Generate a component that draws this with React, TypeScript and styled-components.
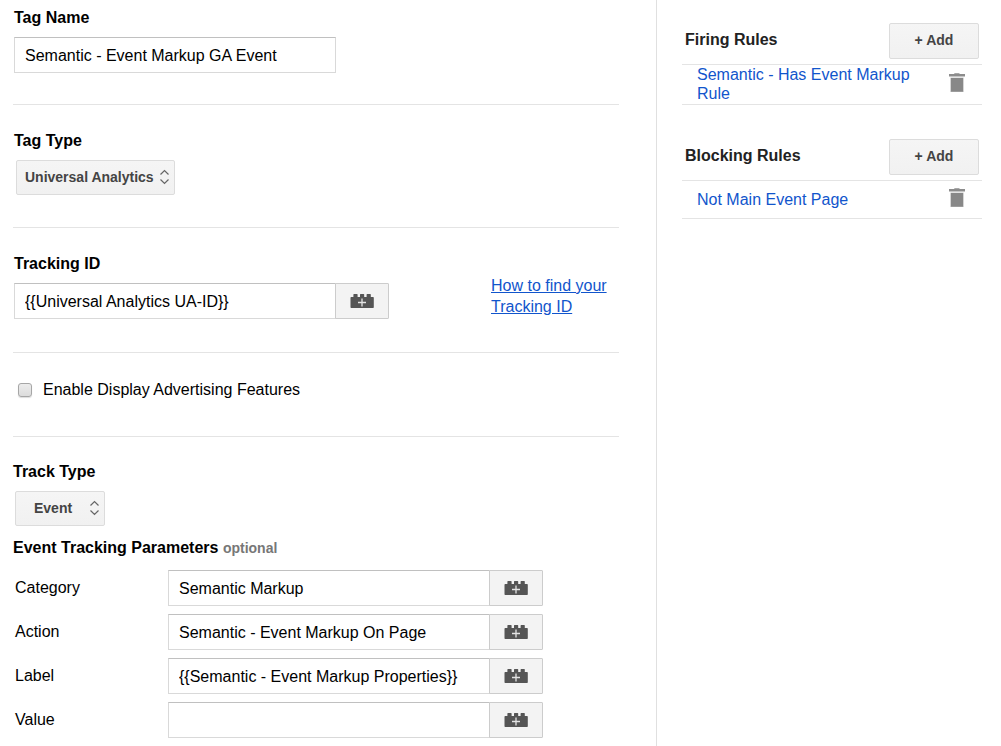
import React from "react";
import styled, { createGlobalStyle } from "styled-components";

const GlobalStyle = createGlobalStyle`
  *, *::before, *::after { box-sizing: border-box; }
  body {
    margin: 0;
    background: #fff;
    color: #000;
    font: 16px/20px "Liberation Sans", Arial, sans-serif;
  }
  button, input, select { font: inherit; color: inherit; margin: 0; }
`;

const Page = styled.div`
  display: flex;
  min-height: 100vh;
`;

const Main = styled.main`
  flex: 1;
  min-width: 0;
  padding: 0 37px 0 13px;
`;

const Sidebar = styled.aside`
  width: 345px;
  flex-shrink: 0;
  border-left: 1px solid #e0e0e0;
  padding: 23px 19px 0 25px;
`;

const Section = styled.section<{ $top?: number; $bottom?: number; $last?: boolean; $inset?: number }>`
  padding: ${(p) => p.$top ?? 26}px 0 ${(p) => p.$bottom ?? 32}px ${(p) => p.$inset ?? 1}px;
  border-bottom: ${(p) => (p.$last ? "none" : "1px solid #e4e4e4")};
`;

const FieldLabel = styled.label`
  display: block;
  width: fit-content;
  margin-bottom: 9px;
  font-weight: bold;
`;

const TextInput = styled.input`
  display: block;
  width: 322px;
  height: 36px;
  padding: 1px 10px 0;
  border: 1px solid #d9d9d9;
  border-top-color: #c0c0c0;
  border-radius: 0;
  background: #fff;
  outline-color: #4d90fe;
`;

const InputGroup = styled.div`
  display: flex;
`;

const MacroButton = styled.button`
  display: flex;
  align-items: center;
  justify-content: center;
  width: 54px;
  height: 36px;
  margin-left: -1px;
  padding: 0;
  border: 1px solid #ccc;
  border-radius: 0 1px 1px 0;
  background: #f3f3f3;
  cursor: pointer;
`;

const SelectBox = styled.div<{ $width: number }>`
  position: relative;
  width: ${(p) => p.$width}px;
  margin-left: 2px;

  svg {
    position: absolute;
    top: 9px;
    right: 5px;
    pointer-events: none;
  }
`;

const Select = styled.select<{ $indent: number }>`
  display: block;
  appearance: none;
  width: 100%;
  height: 35px;
  padding: 0 20px 2px ${(p) => p.$indent}px;
  border: 1px solid #dcdcdc;
  border-radius: 2px;
  background: linear-gradient(#f5f5f5, #f1f1f1);
  color: #444;
  font-size: 14px;
  font-weight: bold;
`;

const TrackingRow = styled.div`
  display: flex;
  justify-content: space-between;
`;

const HelpLink = styled.a`
  width: 128px;
  margin: 21px 0 -2px;
  line-height: 21px;
  color: #15c;
`;

const CheckLabel = styled.label`
  display: flex;
  align-items: center;
  gap: 11px;
  width: fit-content;
  padding-left: 4px;
`;

const Checkbox = styled.input`
  appearance: none;
  width: 14px;
  height: 14px;
  border: 1px solid #a6a6a6;
  border-radius: 3px;
  background: linear-gradient(#ececec, #dcdcdc);
  box-shadow: 0 1px 1px #ddd;

  &:checked { background: #555; }
`;

const ParamsTitle = styled.h2`
  margin: 12px 0;
  font-size: 16px;
  line-height: 20px;
`;

const Optional = styled.span`
  color: #777;
  font-size: 14px;
`;

const ParamList = styled.div`
  display: grid;
  gap: 8px;
`;

const ParamRow = styled.div`
  display: grid;
  grid-template-columns: 153px auto;
  justify-content: start;
  padding-left: 2px;
`;

const ParamLabel = styled.label`
  padding-top: 8px;
`;

const RuleGroup = styled.section`
  margin-bottom: 34px;
`;

const RuleHeader = styled.header`
  display: flex;
  align-items: center;
  justify-content: space-between;
  padding: 0 3px 5px;
`;

const RuleTitle = styled.h2`
  margin: 0 0 2px;
  font-size: 16px;
  line-height: 20px;
  color: #222;
`;

const AddButton = styled.button`
  width: 90px;
  height: 36px;
  padding: 0 0 2px;
  border: 1px solid #dcdcdc;
  border-radius: 2px;
  background: linear-gradient(#f5f5f5, #f1f1f1);
  color: #444;
  font-size: 14px;
  font-weight: bold;
  cursor: pointer;
`;

const RuleItem = styled.div`
  display: flex;
  align-items: center;
  justify-content: space-between;
  min-height: 39px;
  padding: 0 17px 0 15px;
  border: solid #e4e4e4;
  border-width: 1px 0;
  line-height: 19px;
`;

const RuleLink = styled.a`
  max-width: 224px;
  padding-bottom: 1px;
  color: #15c;
  text-decoration: none;
`;

const DeleteButton = styled.button`
  display: flex;
  padding: 0 0 4px;
  border: 0;
  background: none;
  cursor: pointer;
`;

const BrickIcon = () => (
  <svg width="24" height="14" viewBox="0 0 24 14" aria-hidden="true">
    <path
      d="M1.2 3H3.4V.6q0-.6.6-.6h3q.6 0 .6.6V3H10V.6q0-.6.6-.6h3q.6 0 .6.6V3h2.4V.6q0-.6.6-.6h3q.6 0 .6.6V3h2.3q.7 0 .7.7v9.6q0 .7-.7.7H1.2q-.7 0-.7-.7V3.7q0-.7.7-.7z"
      fill="#555"
    />
    <path d="M8 8.5h8M12 4.5v8" stroke="#e4e4e4" strokeWidth="1.3" />
  </svg>
);

const TrashIcon = () => (
  <svg width="16" height="19" viewBox="0 0 16 19" aria-hidden="true">
    <path d="M5.3.2h5.2V1H16v2.6H0V1h5.3z" fill="#8c8c8c" />
    <path d="M1.4 4.6h13.2V19H1.4z" fill="#bbb" />
    <path d="M2 5h12v13.6H2z" fill="#888" />
  </svg>
);

const SortIcon = () => (
  <svg width="11" height="16" viewBox="0 0 11 16" fill="none" stroke="#666" strokeWidth="1.2" aria-hidden="true">
    <path d="M1.5 5.5l4-4 4 4M1.5 10.5l4 4 4-4" />
  </svg>
);

const MacroInput = ({ id, value }: { id: string; value: string }) => (
  <InputGroup>
    <TextInput id={id} type="text" defaultValue={value} />
    <MacroButton type="button" aria-label="Insert macro">
      <BrickIcon />
    </MacroButton>
  </InputGroup>
);

const Picker = ({ id, option, width, indent }: { id: string; option: string; width: number; indent: number }) => (
  <SelectBox $width={width}>
    <Select id={id} $indent={indent}>
      <option>{option}</option>
    </Select>
    <SortIcon />
  </SelectBox>
);

const Rules = ({ title, rule }: { title: string; rule: string }) => (
  <RuleGroup>
    <RuleHeader>
      <RuleTitle>{title}</RuleTitle>
      <AddButton type="button">+ Add</AddButton>
    </RuleHeader>
    <RuleItem>
      <RuleLink href="#">{rule}</RuleLink>
      <DeleteButton type="button" aria-label="Remove rule">
        <TrashIcon />
      </DeleteButton>
    </RuleItem>
  </RuleGroup>
);

const params = [
  { name: "Category", value: "Semantic Markup" },
  { name: "Action", value: "Semantic - Event Markup On Page" },
  { name: "Label", value: "{{Semantic - Event Markup Properties}}" },
  { name: "Value", value: "" },
];

export default function App() {
  return (
    <Page>
      <GlobalStyle />
      <Main>
        <Section $top={8} $bottom={31}>
          <FieldLabel htmlFor="tag-name">Tag Name</FieldLabel>
          <TextInput id="tag-name" type="text" defaultValue="Semantic - Event Markup GA Event" />
        </Section>
        <Section>
          <FieldLabel htmlFor="tag-type">Tag Type</FieldLabel>
          <Picker id="tag-type" option="Universal Analytics" width={159} indent={8} />
        </Section>
        <Section $bottom={33}>
          <TrackingRow>
            <div>
              <FieldLabel htmlFor="tracking-id">Tracking ID</FieldLabel>
              <MacroInput id="tracking-id" value="{{Universal Analytics UA-ID}}" />
            </div>
            <HelpLink href="#">How to find your Tracking ID</HelpLink>
          </TrackingRow>
        </Section>
        <Section $top={27} $bottom={36}>
          <CheckLabel>
            <Checkbox type="checkbox" />
            Enable Display Advertising Features
          </CheckLabel>
        </Section>
        <Section $top={25} $bottom={8} $inset={0} $last>
          <FieldLabel htmlFor="track-type">Track Type</FieldLabel>
          <Picker id="track-type" option="Event" width={90} indent={18} />
          <ParamsTitle>
            Event Tracking Parameters <Optional>optional</Optional>
          </ParamsTitle>
          <ParamList>
            {params.map((p) => (
              <ParamRow key={p.name}>
                <ParamLabel htmlFor={p.name}>{p.name}</ParamLabel>
                <MacroInput id={p.name} value={p.value} />
              </ParamRow>
            ))}
          </ParamList>
        </Section>
      </Main>
      <Sidebar>
        <Rules title="Firing Rules" rule="Semantic - Has Event Markup Rule" />
        <Rules title="Blocking Rules" rule="Not Main Event Page" />
      </Sidebar>
    </Page>
  );
}
